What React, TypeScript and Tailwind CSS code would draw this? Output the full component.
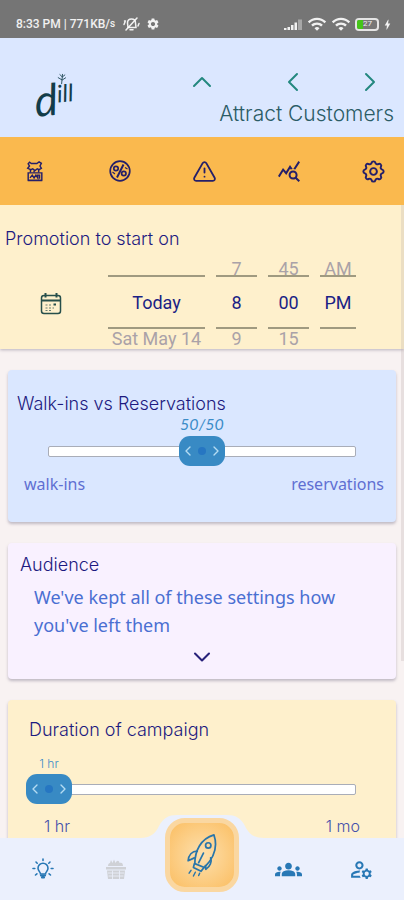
import { useState } from "react";
import type { ReactNode } from "react";
import { ChevronDown, ChevronLeft, ChevronRight, ChevronUp, TriangleAlert } from "lucide-react";
import {
  MdBolt,
  MdGroups,
  MdOutlineManageAccounts,
  MdQueryStats,
  MdSettings,
  MdWifi,
} from "react-icons/md";
import { TbSettings } from "react-icons/tb";

const heading = "font-['Inter',sans-serif] text-lg font-light text-[#1d1a80]";
const card = "mx-2 rounded-sm shadow-[0_2px_3px_rgba(90,80,110,0.35)]";

type WheelProps = {
  label: string;
  prev?: string;
  value: string;
  next?: string;
  width: string;
};

const wheels: WheelProps[] = [
  { label: "Day", value: "Today", next: "Sat May 14", width: "w-[97px]" },
  { label: "Hour", prev: "7", value: "8", next: "9", width: "w-[41px]" },
  { label: "Minute", prev: "45", value: "00", next: "15", width: "w-[41px]" },
  { label: "Period", prev: "AM", value: "PM", width: "w-[36px]" },
];

function Wheel({ label, prev, value, next, width }: WheelProps) {
  return (
    <div
      role="group"
      aria-label={label}
      className={`flex flex-col text-center font-['Roboto',sans-serif] text-lg leading-4 whitespace-nowrap ${width}`}
    >
      <button type="button" className="h-4 border-b-2 border-[#a09a80] text-[#aaa2a8]">
        <span className="block leading-4">{prev}</span>
      </button>
      <span className="pt-[18px] pb-4 text-[#1b1f85]">{value}</span>
      <button type="button" className="h-5 border-t-2 border-[#a09a80] pt-0.5 text-[#aaa2a8]">
        <span className="block leading-4">{next}</span>
      </button>
    </div>
  );
}

type SliderProps = {
  label: string;
  start: number;
  format: (v: number) => string;
  valueClass: string;
};

function Slider({ label, start, format, valueClass }: SliderProps) {
  const [value, setValue] = useState(start);
  const left = `calc((100% - 46px) * ${value / 100})`;

  return (
    <div className="flex flex-col gap-1">
      <output
        className={`block w-[46px] text-center whitespace-nowrap text-[#3a8cc8] ${valueClass}`}
        style={{ marginLeft: left }}
      >
        {format(value)}
      </output>
      <div className="relative grid items-center">
        <div className="col-start-1 row-start-1 mx-[22px] h-[11px] rounded-xs border border-[#a9adb8] bg-white" />
        <input
          type="range"
          aria-label={label}
          min={0}
          max={100}
          value={value}
          onChange={(e) => setValue(Number(e.target.value))}
          className="col-start-1 row-start-1 h-[30px] w-full appearance-none bg-transparent [&::-webkit-slider-thumb]:h-[30px] [&::-webkit-slider-thumb]:w-[46px] [&::-webkit-slider-thumb]:appearance-none [&::-webkit-slider-thumb]:rounded-[11px] [&::-webkit-slider-thumb]:bg-[#388ac4]"
        />
        {/* arrows on top of the thumb */}
        <span
          className="pointer-events-none absolute flex h-[30px] w-[46px] items-center justify-between px-px text-[#b5dcf2]"
          style={{ left }}
        >
          <ChevronLeft size={16} strokeWidth={2} />
          <span className="size-2 rounded-full bg-[#2676c2]" />
          <ChevronRight size={16} strokeWidth={2} />
        </span>
      </div>
    </div>
  );
}

function MutedBellIcon() {
  return (
    <svg width="17" height="14" viewBox="0 0 17 14" fill="none" stroke="currentColor" strokeWidth="1.500" strokeLinecap="round">
      <path d="M5 10.500 4.500 6c0-2.500 1.500-4 4-4s4 1.500 4 4l.5 4.500z" />
      <path d="M7 12.800h3M3 13 14 1M1 7.500 2 5M15 9l1-2.500M1.500 4h1" />
    </svg>
  );
}

function StatusBar() {
  return (
    <div className="flex h-[38px] shrink-0 items-end justify-between bg-[#757575] pr-2.5 pb-1 pl-4 font-['Roboto',sans-serif] text-white/90">
      <div className="flex h-5 items-center text-xs font-medium">
        8:33 PM | 771KB/<span className="text-[10px]">s</span>
        <span className="ml-2">
          <MutedBellIcon />
        </span>
        <MdSettings size={14} className="ml-1.5" />
      </div>
      <div className="flex h-5 items-center">
        <svg width="19" height="13" viewBox="0 0 19 13" fill="currentColor">
          <path d="M0 10h2.500v2H0zM3.500 9H6v3H3.500zM7 7h2.500v5H7zM10.500 4.500H13V12h-2.500z" />
          <path d="M14 1.500h4V12h-4z" opacity=".4" />
        </svg>
        <MdWifi size={20} className="ml-1" />
        <MdWifi size={20} className="ml-1" />
        <div className="ml-1 flex h-[13px] w-6 items-center rounded-sm border-2 border-white/80 bg-[#777]">
          <span className="h-full w-[6px] rounded-l-xs bg-[#45c619]" />
          <span className="text-[8px] leading-none">27</span>
        </div>
        <MdBolt size={13} className="ml-0.5" />
      </div>
    </div>
  );
}

function Logo() {
  return (
    <a
      href="#home"
      aria-label="dill"
      className="relative flex -rotate-6 items-start font-['Lato',sans-serif] text-[#123c49] italic"
    >
      <span className="text-[44px] leading-10">d</span>
      <span className="text-2xl leading-8">ill</span>
      <svg
        className="absolute -top-1 left-6"
        width="12"
        height="12"
        viewBox="0 0 12 12"
        fill="none"
        stroke="currentColor"
        strokeWidth="0.800"
      >
        <path d="M5 11 7 1M6 7 2 4M6 7l4-2M6.500 4 4 1M6.500 4l3-2" />
      </svg>
    </a>
  );
}

function ShowIcon() {
  return (
    <svg width="20" height="23" viewBox="0 0 22 24" fill="none" stroke="currentColor" strokeWidth="1.600">
      <path d="M5 6 3.500 3.500 5 1.800l2 1.500h6l2.500-1.800L18 3l-1.500 3 1.500 2.500-2.500 1.500-2-1-2.500 2-2.500-2-2 1L3 8.500z" />
      <path d="M6 10v3M15 10v3M10 11v2" />
      <path d="M3.500 13.500h15v8h-15zM3 22h16" />
      <path d="m5.500 19 2.500-3 2 3 2-3 2 3v-3h2v4" />
    </svg>
  );
}

function PercentIcon() {
  return (
    <svg width="24" height="24" viewBox="0 0 24 24" fill="none" stroke="currentColor" strokeWidth="1.700">
      <circle cx="12" cy="12" r="9.800" />
      <path d="M15.500 5.500 9 18.500" strokeWidth="2" />
      <circle cx="8" cy="9.500" r="2.200" />
      <circle cx="15.800" cy="14.500" r="2.200" />
      <path d="M4.500 13 7 15M17 8.500l2.500 1.500" strokeWidth="1.200" />
    </svg>
  );
}

function CalendarIcon() {
  return (
    <svg width="22" height="22" viewBox="0 0 22 22" fill="none" stroke="#274f4b" strokeWidth="1.500">
      <rect x="1.500" y="2.500" width="19" height="18" rx="2.500" />
      <path d="M1.500 7.500h19" strokeWidth="2" />
      <path d="M5.500 0v4.500M16.500 0v4.500" strokeWidth="2" />
      <path d="M5.500 12h2M9 12h2M5.500 15h2M9 15h2M12.500 15h1.500M5.500 17.500h2M9 17.500h2" strokeWidth="1.200" opacity=".7" />
      <path d="M13.500 11.500h2.500" strokeWidth="2" />
    </svg>
  );
}

function BulbIcon() {
  return (
    <svg width="22" height="22" viewBox="0 0 22 22" fill="none" stroke="currentColor" strokeWidth="1.600" strokeLinecap="round">
      <path d="M8.500 16c0-2-2.500-3-2.500-5.800a5 5 0 0 1 10 0c0 2.800-2.500 3.800-2.500 5.800z" />
      <path d="M9 17.500h4M10 19.500h2" strokeWidth="2.200" />
      <path d="M11 1v1.500M4 4l1.200 1.200M18 4l-1.200 1.200M1 10.500h1.800M19.200 10.500H21M3.500 17l1.400-1.200M18.500 17l-1.400-1.200" />
    </svg>
  );
}

function BasketIcon() {
  return (
    <svg width="22" height="22" viewBox="0 0 22 22" fill="currentColor">
      <path d="M3 8c0-2 1-3 2-3l1-3 1.500 3L9 1.500 10.500 5C12 2 14 2 14.500 5c2-1 3.500 0 3.500 3z" />
      <path d="M1 9h20v2.500H1zM2 12.500h18l-1 8.500H3z" />
      <path d="M3 15h16M3.500 18h15M7.500 12.500V21M14.500 12.500V21" stroke="#e9edf8" strokeWidth=".9" />
    </svg>
  );
}

function RocketIcon() {
  return (
    <svg width="33" height="44" viewBox="0 0 34 46" fill="none" stroke="#2875aa" strokeWidth="1.800" strokeLinejoin="round" strokeLinecap="round">
      <path d="M9 32C9 19 15 6 29 2c4 12 0 24-10 34z" />
      <circle cx="23" cy="13" r="2.800" />
      <path d="M11.500 19C6 19 2.500 23 2 29l6.500-3M25.500 26c1.500 4-.500 9-5 12l-.500-4" />
      <path d="M18 21 13 31M8.500 32l-1 4 8 4 3-4" />
      <path d="m5 39-2 3M9.500 41l-2 4M14 42l-1 2.500" strokeWidth="1.500" />
    </svg>
  );
}

function ToolButton({ label, children }: { label: string; children: ReactNode }) {
  return (
    <button type="button" aria-label={label} className="flex w-8 justify-center">
      {children}
    </button>
  );
}

export default function App() {
  return (
    <div className="flex h-screen flex-col overflow-hidden bg-[#f8f2f2]">
      <StatusBar />

      <header className="flex h-[99px] shrink-0 items-start justify-between bg-[#dbe7ff] pr-2.5 pl-[34px]">
        <div className="pt-10">
          <Logo />
        </div>
        <div className="flex flex-col items-end pt-7">
          <div className="mr-2 flex w-[200px] justify-between text-[#23887f]">
            <button type="button" aria-label="Up">
              <ChevronUp size={32} strokeWidth={1.5} />
            </button>
            <div className="flex gap-[45px]">
              <button type="button" aria-label="Previous">
                <ChevronLeft size={32} strokeWidth={1.5} />
              </button>
              <button type="button" aria-label="Next">
                <ChevronRight size={32} strokeWidth={1.5} />
              </button>
            </div>
          </div>
          <h1 className="font-['Inter',sans-serif] text-[21px] leading-8 font-light text-[#2b5c66]">
            Attract Customers
          </h1>
        </div>
      </header>

      <div className="flex h-[68px] shrink-0 items-center justify-between bg-[#fab94e] pr-[15px] pl-[19px] text-[#251f69]">
        <ToolButton label="Shows">
          <ShowIcon />
        </ToolButton>
        <ToolButton label="Discounts">
          <PercentIcon />
        </ToolButton>
        <ToolButton label="Alerts">
          <TriangleAlert size={25} strokeWidth={1.75} />
        </ToolButton>
        <ToolButton label="Insights">
          <MdQueryStats size={24} />
        </ToolButton>
        <ToolButton label="Settings">
          <TbSettings size={27} strokeWidth={1.75} />
        </ToolButton>
      </div>

      <main className="relative flex min-h-0 flex-1 flex-col gap-[21px] overflow-y-auto [scrollbar-width:none]">
        <section className="shrink-0 bg-[#fef0cc] pt-5 shadow-[0_1px_3px_rgba(90,80,110,0.4)]">
          <h2 className={`pl-[5px] leading-7 ${heading}`}>Promotion to start on</h2>
          <div className="flex items-center pt-2 pb-0.5 pl-10">
            <button type="button" aria-label="Pick a date">
              <CalendarIcon />
            </button>
            <div className="ml-[46px] flex gap-[11px]">
              {wheels.map((w) => (
                <Wheel key={w.label} {...w} />
              ))}
            </div>
          </div>
        </section>

        <section className={`shrink-0 bg-[#dae7ff] pt-[22px] pb-[26px] ${card}`}>
          <h2 className={`pl-[9px] leading-6 ${heading}`}>Walk-ins vs Reservations</h2>
          <div className="px-[18px]">
            <Slider
              label="Walk-ins vs Reservations"
              start={50}
              format={(v) => `${v}/${100 - v}`}
              valueClass="font-['Lato',sans-serif] text-base leading-4 italic"
            />
          </div>
          <div className="flex justify-between px-4 pt-1.5 pr-3 font-['Noto_Sans',sans-serif] text-base leading-6 text-[#5f6fd2]">
            <span>walk-ins</span>
            <span>reservations</span>
          </div>
        </section>

        <section className={`shrink-0 bg-[#f9f1ff] pt-2.5 pb-1 ${card}`}>
          <h2 className={`pl-3 leading-6 ${heading}`}>Audience</h2>
          <p className="pt-1.5 pr-8 pl-[26px] font-['Noto_Sans',sans-serif] text-lg leading-7 text-[#4a6fd2]">
            We've kept all of these settings how you've left them
          </p>
          <button type="button" aria-label="Expand audience" className="flex w-full justify-center py-1 text-[#28217a]">
            <ChevronDown size={28} strokeWidth={1.75} />
          </button>
        </section>

        <section className={`shrink-0 bg-[#fef0cc] pt-[18px] pb-6 ${card}`}>
          <h2 className={`pl-[21px] leading-6 ${heading}`}>Duration of campaign</h2>
          <div className="px-[18px] pt-4">
            <Slider
              label="Duration of campaign"
              start={0}
              format={(v) => (v === 100 ? "1 mo" : `${1 + v * 7} hr`)}
              valueClass="font-['Inter',sans-serif] text-xs leading-3 font-light"
            />
          </div>
          <div className="flex justify-between px-9 pt-3 font-['Inter',sans-serif] text-base leading-5 font-light text-[#4650ab]">
            <span>1 hr</span>
            <span>1 mo</span>
          </div>
        </section>
        <div className="absolute top-0 right-0 h-[456px] w-[3px] bg-[#b4a8a8]/25" />
      </main>

      <nav className="relative grid h-[62px] shrink-0 grid-cols-[73fr_73fr_100fr_73fr_73fr] items-center bg-[#ebf0fd] px-1.5 text-[#2878b5]">
        <svg
          className="absolute bottom-full left-1/2 -translate-x-1/2"
          width="124"
          height="24"
          viewBox="0 0 124 24"
          fill="#ebf0fd"
        >
          <path d="M0 24C12 24 16 18 19 12 23 4 29 1 37 1H87C95 1 101 4 105 12 108 18 112 24 124 24Z" />
        </svg>
        <a href="#ideas" aria-label="Ideas" className="flex justify-center">
          <BulbIcon />
        </a>
        <a href="#market" aria-label="Market" className="flex justify-center text-[#cfd1d6]">
          <BasketIcon />
        </a>
        <a
          href="#launch"
          aria-label="Launch"
          className="absolute bottom-2 left-1/2 flex size-[74px] -translate-x-1/2 items-center justify-center rounded-[20px] border-[5px] border-[#fad7a1] bg-[radial-gradient(#fde0ae,#fbbe62)]"
        >
          <RocketIcon />
        </a>
        <a href="#groups" aria-label="Groups" className="col-start-4 flex justify-center">
          <MdGroups size={27} />
        </a>
        <a href="#account" aria-label="Account" className="flex justify-center">
          <MdOutlineManageAccounts size={25} />
        </a>
      </nav>
    </div>
  );
}
